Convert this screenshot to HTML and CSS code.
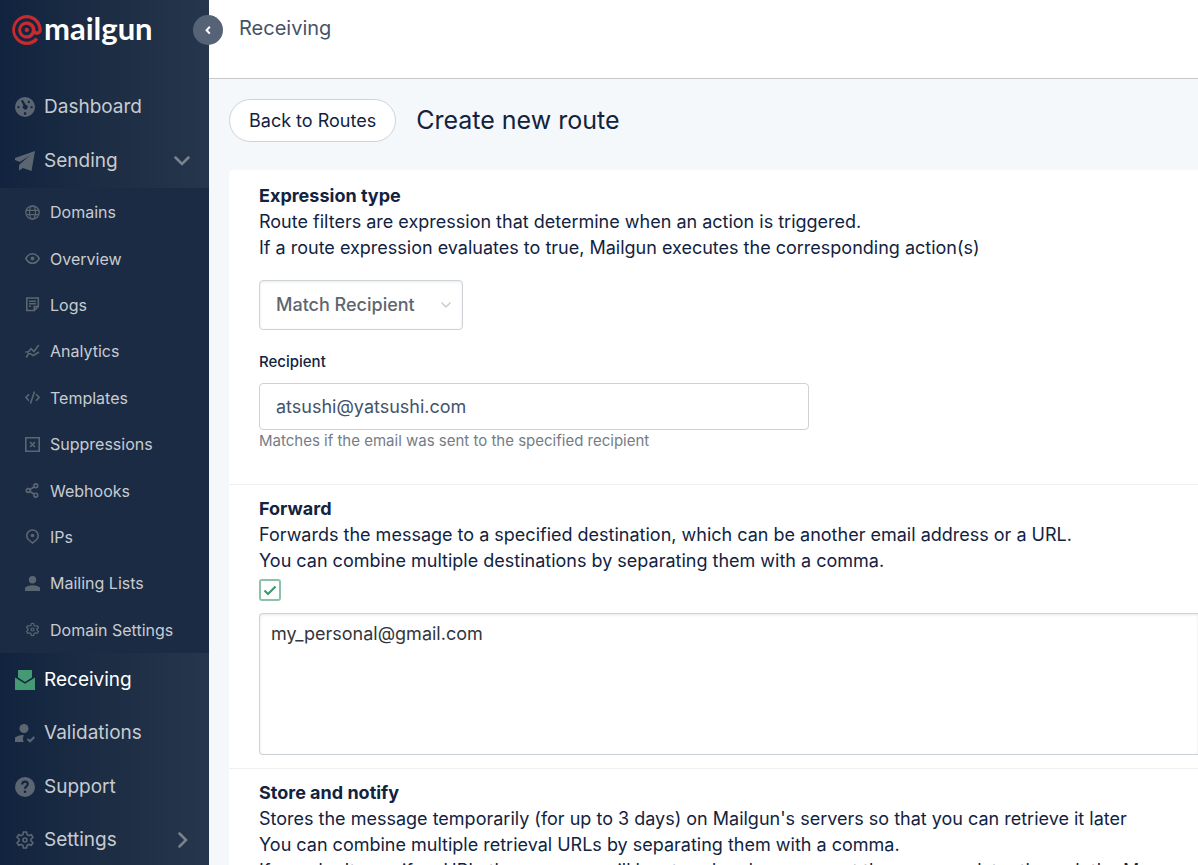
FILE: index.html
```html
<!DOCTYPE html>
<html lang="en">
<head>
<meta charset="utf-8">
<title>Create new route - Mailgun</title>
<link rel="stylesheet" href="styles.css">
</head>
<body>
<div class="app">
  <aside class="sidebar">
    <a class="logo" href="#">
      <svg class="logo-mark" viewBox="0 0 24 24" aria-hidden="true"><path d="M11.837 0c6.602 0 11.984 5.381 11.984 11.994-.017 2.99-3.264 4.84-5.844 3.331a3.805 3.805 0 0 1-.06-.035l-.055-.033-.022.055c-2.554 4.63-9.162 4.758-11.894.232-2.732-4.527.46-10.313 5.746-10.416a6.868 6.868 0 0 1 7.002 6.866 1.265 1.265 0 0 0 2.52 0c0-5.18-4.197-9.38-9.377-9.387C4.611 2.594.081 10.41 3.683 16.673c3.238 5.632 11.08 6.351 15.289 1.402l1.997 1.686A11.95 11.95 0 0 1 11.837 24C2.6 23.72-2.87 13.543 1.992 5.684A12.006 12.006 0 0 1 11.837 0Zm0 7.745c-3.276-.163-5.5 3.281-4.003 6.2a4.26 4.26 0 0 0 4.014 2.31c3.276-.171 5.137-3.824 3.35-6.575a4.26 4.26 0 0 0-3.36-1.935Zm0 2.53c1.324 0 2.152 1.433 1.49 2.58a1.72 1.72 0 0 1-1.49.86 1.72 1.72 0 1 1 0-3.44Z"/></svg>
      <span class="logo-text">mailgun</span>
    </a>
    <button class="collapse" type="button" aria-label="Collapse menu"><svg viewBox="0 0 30 30"><path d="M16.8 11.8 13.6 15.2l3.2 3.4"/></svg></button>
    <nav>
      <ul class="menu">
        <li><a href="#"><svg class="icon fill" viewBox="0 0 20 20"><path fill-rule="evenodd" d="M10 0a10 10 0 1 1 0 20 10 10 0 0 1 0-20ZM6.2 3.9l2.2 4.6a2.4 2.4 0 1 0 2.3-.8L8 3.3a1 1 0 0 0-1.800.6ZM3.400 8.900a1.200 1.200 0 1 0 .01 0ZM16.600 8.900a1.200 1.200 0 1 0 .01 0ZM13.800 3.800a1.200 1.200 0 1 0 .01 0ZM8.900 15.300v2.400h2.300v-2.400Z"/></svg><span>Dashboard</span></a></li>
        <li><a href="#"><svg class="icon fill" viewBox="0 0 20 20"><path d="M20 0 0 7v2l4.800 2L15 4.500 5.500 12.500 4 14.500V19.500l4-2.500 8.500 3Z"/></svg><span>Sending</span><svg class="chevron" viewBox="0 0 16 16"><path d="M1.500 4.500 8 11l6.500-6.500"/></svg></a>
        </li>
      </ul>
      <ul class="submenu">
        <li><a href="#"><svg class="icon" viewBox="0 0 15 15"><circle cx="7.500" cy="7.500" r="6.700"/><ellipse cx="7.500" cy="7.500" rx="3" ry="6.700"/><path d="M1 5.300h13M1 9.700h13"/></svg><span>Domains</span></a></li>
        <li><a href="#"><svg class="icon" viewBox="0 0 15 15"><path class="bold" d="M.8 7.500Q3.500 2.700 7.500 2.700t6.700 4.800q-2.700 4.800-6.700 4.800T.8 7.500Z"/><circle class="solid" cx="7.500" cy="7.500" r="1.900"/></svg><span>Overview</span></a></li>
        <li><a href="#"><svg class="icon" viewBox="0 0 15 15"><path class="bold" d="M1.800 1h11.500v8.500l-4 4H1.800ZM9.300 13.500v-4h4M4 4.300h7M4 6.800h7M4 9.200h2"/></svg><span>Logs</span></a></li>
        <li><a href="#"><svg class="icon" viewBox="0 0 15 15"><path class="bold" d="M.3 8h3l2.700-3.300 3 2.800L13.800 1M1.300 13.500l2-3.700h2.200l2.700 1.700 5.800-3.500"/></svg><span>Analytics</span></a></li>
        <li><a href="#"><svg class="icon" viewBox="0 0 15 15"><path class="bold" d="M4 4.200.9 7.500 4 10.800M11 4.200l3.100 3.300L11 10.800M9.500 1.500l-4 12"/></svg><span>Templates</span></a></li>
        <li><a href="#"><svg class="icon" viewBox="0 0 15 15"><path class="bold" d="M.8.800h13.400v13.400H.8ZM5 5l5 5M10 5l-5 5"/></svg><span>Suppressions</span></a></li>
        <li><a href="#"><svg class="icon" viewBox="0 0 15 15"><g class="bold"><circle cx="3.200" cy="7.500" r="1.900"/><circle cx="10.800" cy="2.800" r="1.900"/><circle cx="10.800" cy="12.200" r="1.900"/><path d="m5 6.500 4-2.500M5 8.500l4 2.500"/></g></svg><span>Webhooks</span></a></li>
        <li><a href="#"><svg class="icon" viewBox="0 0 15 15"><path class="bold" d="M7.500 14 3.300 10.500A5.700 5.700 0 1 1 11.700 10.500Z"/><circle class="solid" cx="7.500" cy="6.500" r="1.800"/></svg><span>IPs</span></a></li>
        <li><a href="#"><svg class="icon fill" viewBox="0 0 15 15"><path d="M7.500 0a3.700 3.700 0 1 1 0 7.400 3.700 3.700 0 0 1 0-7.400ZM0 15v-3.500Q3 9.200 7.500 9.200T15 11.500V15Z"/></svg><span>Mailing Lists</span></a></li>
        <li><a href="#"><svg class="icon" viewBox="0 0 20 20"><g class="bold"><path d="m8.500 2-.5 2.500-2 1.100-2.400-.8-1.500 2.600L4 9v2l-1.900 1.600 1.500 2.600 2.400-.8 2 1.100.5 2.500h3l.5-2.500 2-1.100 2.400.8 1.500-2.600L16 11V9l1.900-1.600-1.500-2.600-2.400.8-2-1.100-.5-2.500Z"/><circle cx="10" cy="10" r="2"/></g></svg><span>Domain Settings</span></a></li>
      </ul>
      <ul class="menu lower">
        <li><a class="active" href="#"><svg class="icon fill" viewBox="0 0 20 20"><path d="M3 0h14v7.500L10 12 3 7.500ZM0 7.500l10 6.200 10-6.200V20H0Z"/></svg><span>Receiving</span></a></li>
        <li><a href="#"><svg class="icon fill" viewBox="0 0 20 20"><circle cx="9" cy="5.500" r="4.500"/><path d="M0 19v-4.500Q3.500 11.500 8.700 12q-1.500 3.500 0 7Z"/><path class="tick" d="m12.500 16 2.500 2.300 4.300-4.300"/></svg><span>Validations</span></a></li>
        <li><a href="#"><svg class="icon fill" viewBox="0 0 20 20"><circle cx="10" cy="10" r="10"/><path class="query" d="M7.200 7.500q0-2.800 2.800-2.800t2.800 2.400c0 2-2.800 2-2.800 4.600"/><circle class="query-dot" cx="10" cy="14.800" r="1.300"/></svg><span>Support</span></a></li>
        <li><a href="#"><svg class="icon" viewBox="0 0 20 20"><g class="bold"><path d="m8.500 2-.5 2.500-2 1.100-2.400-.8-1.500 2.600L4 9v2l-1.900 1.600 1.500 2.600 2.400-.8 2 1.100.5 2.500h3l.5-2.500 2-1.100 2.400.8 1.500-2.600L16 11V9l1.900-1.600-1.500-2.600-2.400.8-2-1.100-.5-2.500Z"/><circle cx="10" cy="10" r="2"/></g></svg><span>Settings</span><svg class="chevron" viewBox="0 0 16 16"><path d="m5.500 1.500 6.500 6.500-6.500 6.500"/></svg></a></li>
      </ul>
    </nav>
  </aside>
  <div class="page">
    <header class="topbar">Receiving</header>
    <main class="content">
      <div class="heading">
        <a class="back" href="#">Back to Routes</a>
        <h1>Create new route</h1>
      </div>
      <form class="card">
        <section>
          <h2>Expression type</h2>
          <p>Route filters are expression that determine when an action is triggered.<br>If a route expression evaluates to true, Mailgun executes the corresponding action(s)</p>
          <div class="select-wrap">
            <select aria-label="Expression type"><option>Match Recipient</option></select>
            <svg viewBox="0 0 12 12" aria-hidden="true"><path d="m1.500 3.500 4.500 4.500 4.500-4.500"/></svg>
          </div>
          <label class="field-label" for="recipient">Recipient</label>
          <input class="text" id="recipient" type="text" value="atsushi@yatsushi.com">
          <small>Matches if the email was sent to the specified recipient</small>
        </section>
        <section>
          <h2 id="forward">Forward</h2>
          <p>Forwards the message to a specified destination, which can be another email address or a URL.<br>You can combine multiple destinations by separating them with a comma.</p>
          <div class="check">
            <input type="checkbox" aria-labelledby="forward" checked>
            <svg viewBox="0 0 22 22" aria-hidden="true"><path d="m5.500 11.500 3.500 3.500 7.500-7.500"/></svg>
          </div>
          <textarea aria-label="Forward destinations">my_personal@gmail.com</textarea>
        </section>
        <section>
          <h2>Store and notify</h2>
          <p>Stores the message temporarily (for up to 3 days) on Mailgun's servers so that you can retrieve it later<br>You can combine multiple retrieval URLs by separating them with a comma.<br>If you don't specify a URL, the message will be stored and you can get the message later through the Messages API</p>
        </section>
      </form>
    </main>
  </div>
</div>
</body>
</html>
```
FILE: styles.css
```css
* { box-sizing: border-box; }
body {
  margin: 0;
  font-family: Inter, "Liberation Sans", sans-serif;
  font-size: 18px;
  line-height: 26px;
  color: #12233f;
}
a { color: inherit; text-decoration: none; }
ul { list-style: none; margin: 0; padding: 0; }
input, select, textarea, button { font: inherit; }

.app { display: flex; height: 100vh; overflow: hidden; }

.sidebar {
  position: relative;
  flex: 0 0 209px;
  background: linear-gradient(90deg, #12233f, #1e2f45 60%, #26374d);
  color: #c8cbd0;
}
.logo { display: flex; align-items: center; height: 80px; padding: 0 0 20px 12px; }
.logo-mark { width: 30px; height: 30px; fill: #c72b2f; }
.logo-text {
  margin-left: 2px;
  padding-bottom: 4px;
  font-family: Lato, sans-serif;
  font-weight: 700;
  font-size: 31px;
  color: #fff;
}
.collapse {
  position: absolute;
  top: 15px;
  right: -14px;
  width: 30px;
  height: 30px;
  padding: 0;
  border: 0;
  border-radius: 50%;
  background: #566376;
}
.collapse svg { display: block; fill: none; stroke: #fff; stroke-width: 2; }

.menu, .submenu { display: grid; grid-auto-rows: 1fr; }
.menu { height: 108px; font-size: 19px; }
.menu.lower { height: 214px; }
.submenu { height: 465px; padding-top: 1px; font-size: 16px; background: #1b2b43; }
.menu a, .submenu a { display: flex; align-items: center; height: 100%; }
.menu a { gap: 9px; padding: 0 19px 0 15px; }
.submenu a { gap: 10px; padding: 0 25px; }
.menu .active { color: #fff; }
.icon { width: 15px; height: 15px; flex: none; fill: none; stroke: #5c6673; stroke-width: 1.3; }
.menu .icon { width: 20px; height: 20px; }
.icon.fill { fill: #5c6673; stroke: none; }
.active .icon.fill { fill: #459a73; }
.icon .solid { fill: #5c6673; stroke: none; }
.icon .bold { stroke-width: 1.6; }
.icon .tick { fill: none; stroke: #5c6673; stroke-width: 2; }
.icon .query { fill: none; stroke: #14253f; stroke-width: 2.2; }
.icon .query-dot { fill: #14253f; }
.chevron { width: 16px; height: 16px; margin-left: auto; fill: none; stroke: #7b838e; stroke-width: 2.5; stroke-linecap: round; }

.page { flex: 1; min-width: 0; background: #f4f8fb; }
.topbar {
  height: 79px;
  padding: 15px 30px;
  border-bottom: 1px solid #c6c8cb;
  background: #fff;
  font-size: 20px;
  color: #45536a;
}
.content { padding: 20px 0 0 20px; }
.heading { display: flex; align-items: center; gap: 20px; margin-bottom: 28px; }
.back { padding: 8px 19px; border: 1px solid #cfd2d6; border-radius: 22px; background: #fff; line-height: 25px; }
h1 { margin: 0; font-size: 25px; line-height: 25px; font-weight: 400; }
.card { background: #fff; border-top-left-radius: 4px; white-space: nowrap; }
.card section { padding: 13px 0 13px 30px; }
.card section + section { padding-top: 11px; border-top: 1px solid #eff0f1; }
h2 { margin: 0; font-size: 18px; line-height: 26px; font-weight: 700; }
p { margin: 0; }

.select-wrap { position: relative; width: 204px; margin: 19px 0; }
.select-wrap select {
  display: block;
  appearance: none;
  width: 100%;
  height: 50px;
  padding: 0 16px;
  border: 1px solid #ced2d7;
  border-radius: 4px;
  background: #fff;
  box-shadow: inset 0 1px 3px #e6eaec;
  font-weight: 500;
  color: #5f656e;
}
.select-wrap svg { position: absolute; right: 11px; top: 19px; width: 12px; height: 12px; fill: none; stroke: #c8cdd3; stroke-width: 1.5; pointer-events: none; }
.field-label { display: block; margin-bottom: 8px; font-size: 15px; font-weight: 500; }
.text {
  display: block;
  width: 100%;
  max-width: 550px;
  height: 47px;
  padding: 0 16px;
  border: 1px solid #ced2d7;
  border-radius: 4px;
  color: #45536a;
}
small { display: block; margin-bottom: 19px; font-size: 15px; line-height: 22px; color: #757c86; }

.check { position: relative; width: 22px; height: 22px; margin: 5px 0 12px; }
.check input { display: block; appearance: none; width: 22px; height: 22px; margin: 0; border: 2px solid #8cc3a8; border-radius: 3px; background: #fff; }
.check svg { position: absolute; inset: 0; fill: none; stroke: #3e9a6e; stroke-width: 2.2; pointer-events: none; }
textarea {
  display: block;
  width: 100%;
  height: 142px;
  padding: 7px 11px;
  border: 1px solid #ced2d7;
  border-right: 0;
  border-radius: 4px 0 0 4px;
  box-shadow: inset 0 1px 3px #e6eaec;
  color: #33363b;
  resize: none;
}
```
